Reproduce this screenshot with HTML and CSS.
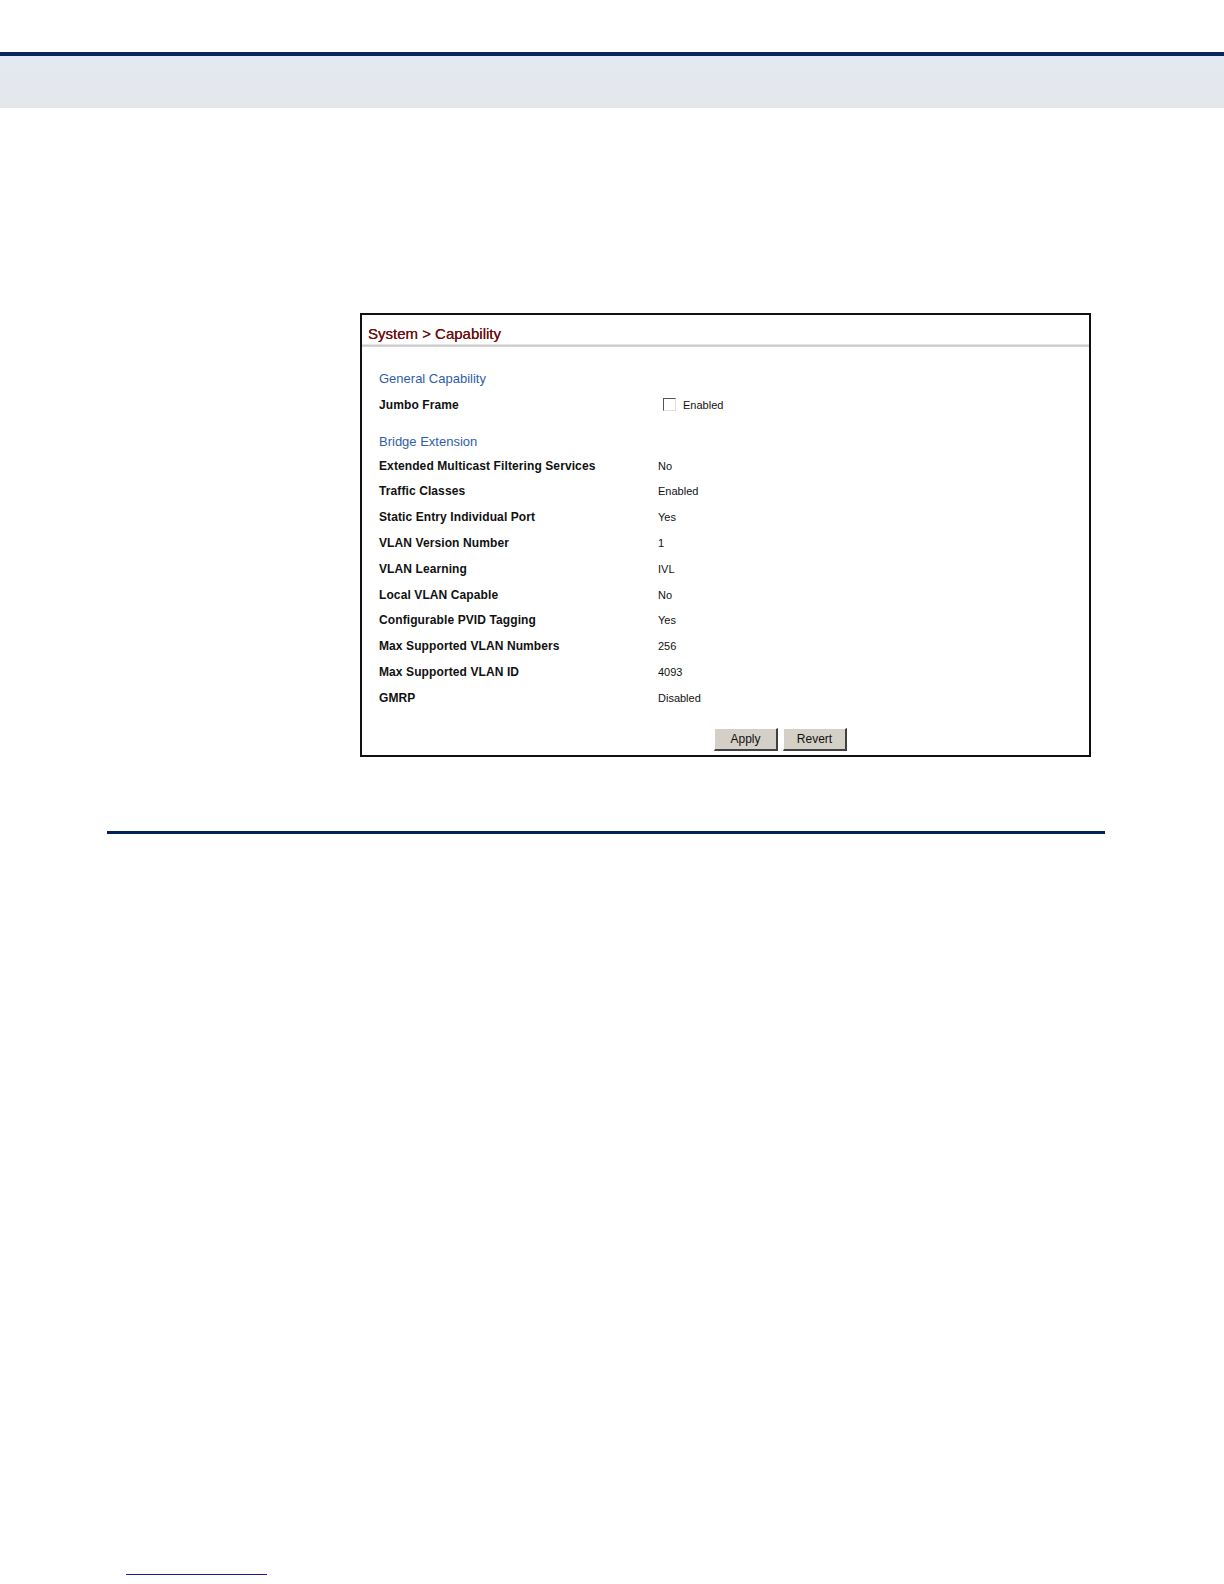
FILE: index.html
```html
<!DOCTYPE html>
<html>
<head>
<meta charset="utf-8">
<link rel="stylesheet" href="styles.css">
</head>
<body>
<div class="page-head"></div>
<div class="content">
  <div class="panel">
    <div class="panel-title">System &gt; Capability</div>
    <div class="panel-body">
      <div class="section-title">General Capability</div>
      <div class="row row-first">
        <div class="label">Jumbo Frame</div>
        <div class="value"><span class="checkbox"></span><span class="check-label">Enabled</span></div>
      </div>
      <div class="section-title section-second">Bridge Extension</div>
      <div class="rows">
        <div class="row"><div class="label">Extended Multicast Filtering Services</div><div class="value">No</div></div>
        <div class="row"><div class="label">Traffic Classes</div><div class="value">Enabled</div></div>
        <div class="row"><div class="label">Static Entry Individual Port</div><div class="value">Yes</div></div>
        <div class="row"><div class="label">VLAN Version Number</div><div class="value">1</div></div>
        <div class="row"><div class="label">VLAN Learning</div><div class="value">IVL</div></div>
        <div class="row"><div class="label">Local VLAN Capable</div><div class="value">No</div></div>
        <div class="row"><div class="label">Configurable PVID Tagging</div><div class="value">Yes</div></div>
        <div class="row"><div class="label">Max Supported VLAN Numbers</div><div class="value">256</div></div>
        <div class="row"><div class="label">Max Supported VLAN ID</div><div class="value">4093</div></div>
        <div class="row"><div class="label">GMRP</div><div class="value">Disabled</div></div>
      </div>
      <div class="buttons">
        <button class="btn">Apply</button>
        <button class="btn">Revert</button>
      </div>
    </div>
  </div>
  <div class="rule"></div>
  <div class="foot-line"></div>
</div>
</body>
</html>
```

FILE: styles.css
```css
html, body {
  margin: 0;
  padding: 0;
  background: #ffffff;
  font-family: "Liberation Sans", Arial, sans-serif;
}
.page-head {
  margin-top: 52px;
  height: 52px;
  border-top: 4px solid #0b2462;
  background: linear-gradient(#e4e8f1, #e4e7ea);
}
.content {
  display: flex;
  flex-direction: column;
}
.panel {
  margin-top: 205px;
  margin-left: 360px;
  width: 727px;
  height: 440px;
  border: 2px solid #111111;
  box-sizing: content-box;
}
.panel-title {
  height: 32px;
  padding-left: 6px;
  line-height: 38px;
  font-size: 15px;
  color: #6b0f0f;
  text-shadow: 0 0 0.4px #6b0f0f;
  background: linear-gradient(#ffffff 0px, #ffffff 29px, #c9c9c9 30px, #e2e2e2 33px, #ffffff 38px);
}
.panel-body {
  padding-left: 17px;
}
.section-title {
  margin-top: 24px;
  font-size: 13px;
  color: #2f5ea6;
  line-height: 16px;
}
.section-second {
  margin-top: 16px;
}
.row {
  display: grid;
  grid-template-columns: 279px auto;
  height: 25.8px;
  align-items: center;
}
.row-first {
  margin-top: 5px;
}
.rows {
  margin-top: 3px;
}
.label {
  font-size: 12px;
  font-weight: bold;
  color: #111111;
  letter-spacing: 0.1px;
}
.value {
  font-size: 11px;
  color: #111111;
  display: flex;
  align-items: center;
}
.checkbox {
  display: inline-block;
  width: 11px;
  height: 11px;
  margin-left: 5px;
  border-top: 1px solid #555555;
  border-left: 1px solid #555555;
  border-right: 1px solid #e0e0e0;
  border-bottom: 1px solid #e0e0e0;
  background: #ffffff;
}
.check-label {
  margin-left: 7px;
}
.buttons {
  display: flex;
  gap: 5px;
  margin-top: 17px;
  margin-left: 335px;
}
.btn {
  width: 64px;
  height: 23px;
  padding: 0;
  font-family: "Liberation Sans", Arial, sans-serif;
  font-size: 12px;
  color: #111111;
  background: #d4d0c8;
  border-top: 1px solid #ffffff;
  border-left: 1px solid #ffffff;
  border-right: 2px solid #404040;
  border-bottom: 2px solid #404040;
}
.rule {
  margin-top: 74px;
  margin-left: 107px;
  width: 998px;
  height: 3px;
  background: #00245a;
}
.foot-line {
  margin-top: 740px;
  margin-left: 126px;
  width: 141px;
  height: 1px;
  background: #1a1a8c;
}
```
